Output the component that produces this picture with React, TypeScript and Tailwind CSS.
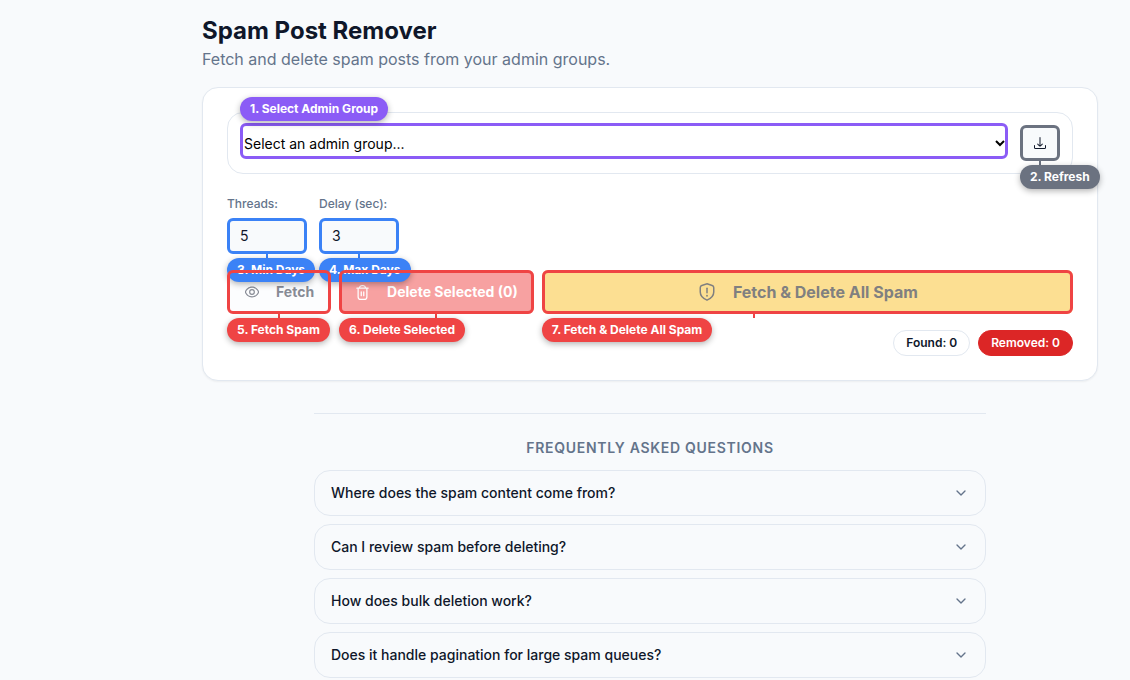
import * as React from 'react'
import { ChevronDown } from 'lucide-react'

type TagProps = {
  className: string
  children: React.ReactNode
}

const faqs = [
  'Where does the spam content come from?',
  'Can I review spam before deleting?',
  'How does bulk deletion work?',
  'Does it handle pagination for large spam queues?'
]

function Tag({ className, children }: TagProps) {
  return (
    <span
      className={`pointer-events-none absolute left-0 h-6 rounded-full px-2.5 text-xs leading-6 font-bold whitespace-nowrap text-white shadow-[0_2px_6px_rgba(0,0,0,0.3)] ${className}`}
    >
      {children}
    </span>
  )
}

// Short line between a control and the tag below it
function Stem({ className }: { className: string }) {
  return <span className={`pointer-events-none absolute top-full h-1 w-0.5 -translate-x-1/2 ${className}`} />
}

// Drawn above the tags of the row before it
function RedFrame() {
  return <span className="pointer-events-none absolute inset-0 z-20 rounded-md border-3 border-[#ef4444]" />
}

function EyeIcon() {
  return (
    <svg width="14" height="14" viewBox="0 0 24 24" fill="currentColor" className="mx-px">
      <path d="M23.270 9.420C21.720 6.890 18.190 2.655 12 2.655S2.280 6.890.729 9.419a4.908 4.908 0 0 0 0 5.162C2.280 17.110 5.811 21.345 12 21.345s9.719-4.235 11.270-6.764a4.908 4.908 0 0 0 0-5.162Zm-1.705 4.115c-1.332 2.168-4.345 5.810-9.565 5.810s-8.233-3.642-9.565-5.810a2.918 2.918 0 0 1 0-3.070C3.767 8.297 6.780 4.655 12 4.655s8.233 3.638 9.565 5.810a2.918 2.918 0 0 1 0 3.070Z" />
      <circle cx="12" cy="12" r="4" fill="none" stroke="currentColor" strokeWidth="2" />
    </svg>
  )
}

function TrashIcon() {
  return (
    <svg width="15" height="15" viewBox="0 0 24 24" fill="currentColor" className="mr-px">
      <path d="M21 4H17.900A5.009 5.009 0 0 0 13 0H11A5.009 5.009 0 0 0 6.100 4H3A1 1 0 0 0 3 6H4V19a5.006 5.006 0 0 0 5 5h6a5.006 5.006 0 0 0 5-5V6h1a1 1 0 0 0 0-2ZM11 2h2a3.006 3.006 0 0 1 2.829 2H8.171A3.006 3.006 0 0 1 11 2Zm7 17a3 3 0 0 1-3 3H9a3 3 0 0 1-3-3V6H18Z" />
      <path d="M10 11v6M14 11v6" stroke="currentColor" strokeWidth="2" strokeLinecap="round" />
    </svg>
  )
}

function ShieldIcon() {
  return (
    <svg width="18" height="18" viewBox="0 0 24 24" fill="none" stroke="currentColor" strokeWidth="2" strokeLinecap="round" className="mx-px">
      <path d="M12 1.100 18.900 3.400A3 3 0 0 1 21 6.300V12c0 5.700-5.800 9.500-9 10.900C8.800 21.500 3 17.700 3 12V6.300a3 3 0 0 1 2.100-2.900L12 1.100Z" />
      <path d="M12 7v6" />
      <circle cx="12" cy="17" r="1.200" fill="currentColor" stroke="none" />
    </svg>
  )
}

function DownloadIcon() {
  return (
    <svg width="12" height="12" viewBox="0 0 24 24" fill="currentColor">
      <path d="M9.878 18.122a3 3 0 0 0 4.244 0l3.211-3.211A1 1 0 0 0 15.919 13.500l-2.926 2.927L13 1a1 1 0 0 0-2 0l-.009 15.408L8.081 13.500a1 1 0 0 0-1.414 1.415Z" />
      <path d="M23 16a1 1 0 0 0-1 1v4a1 1 0 0 1-1 1H3a1 1 0 0 1-1-1V17a1 1 0 0 0-2 0v4a3 3 0 0 0 3 3H21a3 3 0 0 0 3-3V17A1 1 0 0 0 23 16Z" />
    </svg>
  )
}

export default function App() {
  const [group, setGroup] = React.useState('')
  const [threads, setThreads] = React.useState('5')
  const [delay, setDelay] = React.useState('3')

  return (
    <div className="min-h-screen bg-[#f8fafc] font-['Inter',sans-serif] text-[#0f172a]">
      <main className="ml-[170px] px-8 pt-[15px]">
        <div className="mx-auto max-w-4xl">
          <h1 className="text-2xl leading-8 font-bold">Spam Post Remover</h1>
          <p className="text-base leading-6 text-[#64748b]">Fetch and delete spam posts from your admin groups.</p>

          <section className="mt-4 rounded-2xl border border-slate-200 bg-white p-6 shadow-xs">
            <div className="flex items-start gap-3 rounded-2xl border border-slate-200 px-3 pt-2.5 pb-3">
              <div className="relative flex-1 rounded-md bg-white pt-1 outline-3 -outline-offset-3 outline-[#8b5cf6]">
                <select
                  aria-label="Admin group"
                  value={group}
                  onChange={(e) => setGroup(e.target.value)}
                  className="block h-8 w-full bg-transparent text-sm text-black focus:outline-none"
                >
                  <option value="">Select an admin group...</option>
                </select>
                <Tag className="bottom-full mb-0.5 bg-[#8b5cf6]">1. Select Admin Group</Tag>
              </div>
              <div className="relative mt-0.5">
                <button
                  type="button"
                  aria-label="Refresh"
                  className="flex h-9 w-10 items-center justify-center rounded-md border-3 border-[#6b7280] bg-[#f8fafc]"
                >
                  <DownloadIcon />
                </button>
                <Stem className="left-1/2 bg-[#6b7280]" />
                <Tag className="top-full mt-1 bg-[#6b7280]">2. Refresh</Tag>
              </div>
            </div>

            <div className="mt-5 flex gap-3">
              <div className="relative w-20">
                <label htmlFor="threads" className="block text-xs leading-5 font-medium text-[#64748b]">Threads:</label>
                <input
                  id="threads"
                  type="text"
                  value={threads}
                  onChange={(e) => setThreads(e.target.value)}
                  className="mt-1 block h-9 w-full rounded-md border-3 border-[#3b82f6] bg-[#f8fafc] px-2.5 pb-0.5 text-sm"
                />
                <Stem className="left-1/2 bg-[#3b82f6]" />
                <Tag className="top-full z-10 mt-1 bg-[#3b82f6]">3. Min Days</Tag>
              </div>
              <div className="relative w-20">
                <label htmlFor="delay" className="block text-xs leading-5 font-medium whitespace-nowrap text-[#64748b]">Delay (sec):</label>
                <input
                  id="delay"
                  type="text"
                  value={delay}
                  onChange={(e) => setDelay(e.target.value)}
                  className="mt-1 block h-9 w-full rounded-md border-3 border-[#3b82f6] bg-[#f8fafc] px-2.5 pb-0.5 text-sm"
                />
                <Stem className="left-1/2 bg-[#3b82f6]" />
                <Tag className="top-full z-10 mt-1 bg-[#3b82f6]">4. Max Days</Tag>
              </div>
            </div>

            <div className="mt-4 flex gap-2">
              <div className="relative">
                <button
                  type="button"
                  disabled
                  className="flex h-11 items-center gap-4 rounded-md bg-[#fcfdfe] px-[17px] text-sm font-bold text-[#878b95]"
                >
                  <EyeIcon />
                  Fetch
                </button>
                <RedFrame />
                <Stem className="left-1/2 bg-[#ef4444]" />
                <Tag className="top-full mt-1 bg-[#ef4444]">5. Fetch Spam</Tag>
              </div>
              <div className="relative">
                <button
                  type="button"
                  disabled
                  className="flex h-11 items-center gap-4 rounded-md bg-[#f7a1a1] px-4 text-sm font-bold text-white"
                >
                  <TrashIcon />
                  Delete Selected (0)
                </button>
                <RedFrame />
                <Stem className="left-1/2 bg-[#ef4444]" />
                <Tag className="top-full mt-1 bg-[#ef4444]">6. Delete Selected</Tag>
              </div>
              <div className="relative flex-1">
                <button
                  type="button"
                  disabled
                  className="flex h-11 w-full items-center justify-center gap-4 rounded-md bg-[#fcdf92] text-base font-bold text-[#808080]"
                >
                  <ShieldIcon />
                  Fetch &amp; Delete All Spam
                </button>
                <RedFrame />
                <Stem className="left-2/5 bg-[#ef4444]" />
                <Tag className="top-full mt-1 bg-[#ef4444]">7. Fetch &amp; Delete All Spam</Tag>
              </div>
            </div>

            <div className="mt-4 flex justify-end gap-2 text-xs leading-4 font-semibold">
              <span className="rounded-full border border-slate-200 px-3 py-1">Found: 0</span>
              <span className="rounded-full border border-[#dc2626] bg-[#dc2626] px-3 py-1 text-white">Removed: 0</span>
            </div>
          </section>

          <section className="mx-auto mt-8 max-w-2xl border-t border-slate-200 pt-6">
            <h2 className="text-center text-sm leading-5 font-semibold tracking-wider text-[#64748b] uppercase">
              Frequently Asked Questions
            </h2>
            <div className="mt-3 space-y-2">
              {faqs.map(question => (
                <button
                  key={question}
                  type="button"
                  className="flex w-full items-center justify-between rounded-2xl border border-slate-200 px-4 py-3 text-left text-sm leading-5 font-medium"
                >
                  {question}
                  <ChevronDown size={16} className="text-[#64748b]" />
                </button>
              ))}
            </div>
          </section>
        </div>
      </main>
    </div>
  )
}
